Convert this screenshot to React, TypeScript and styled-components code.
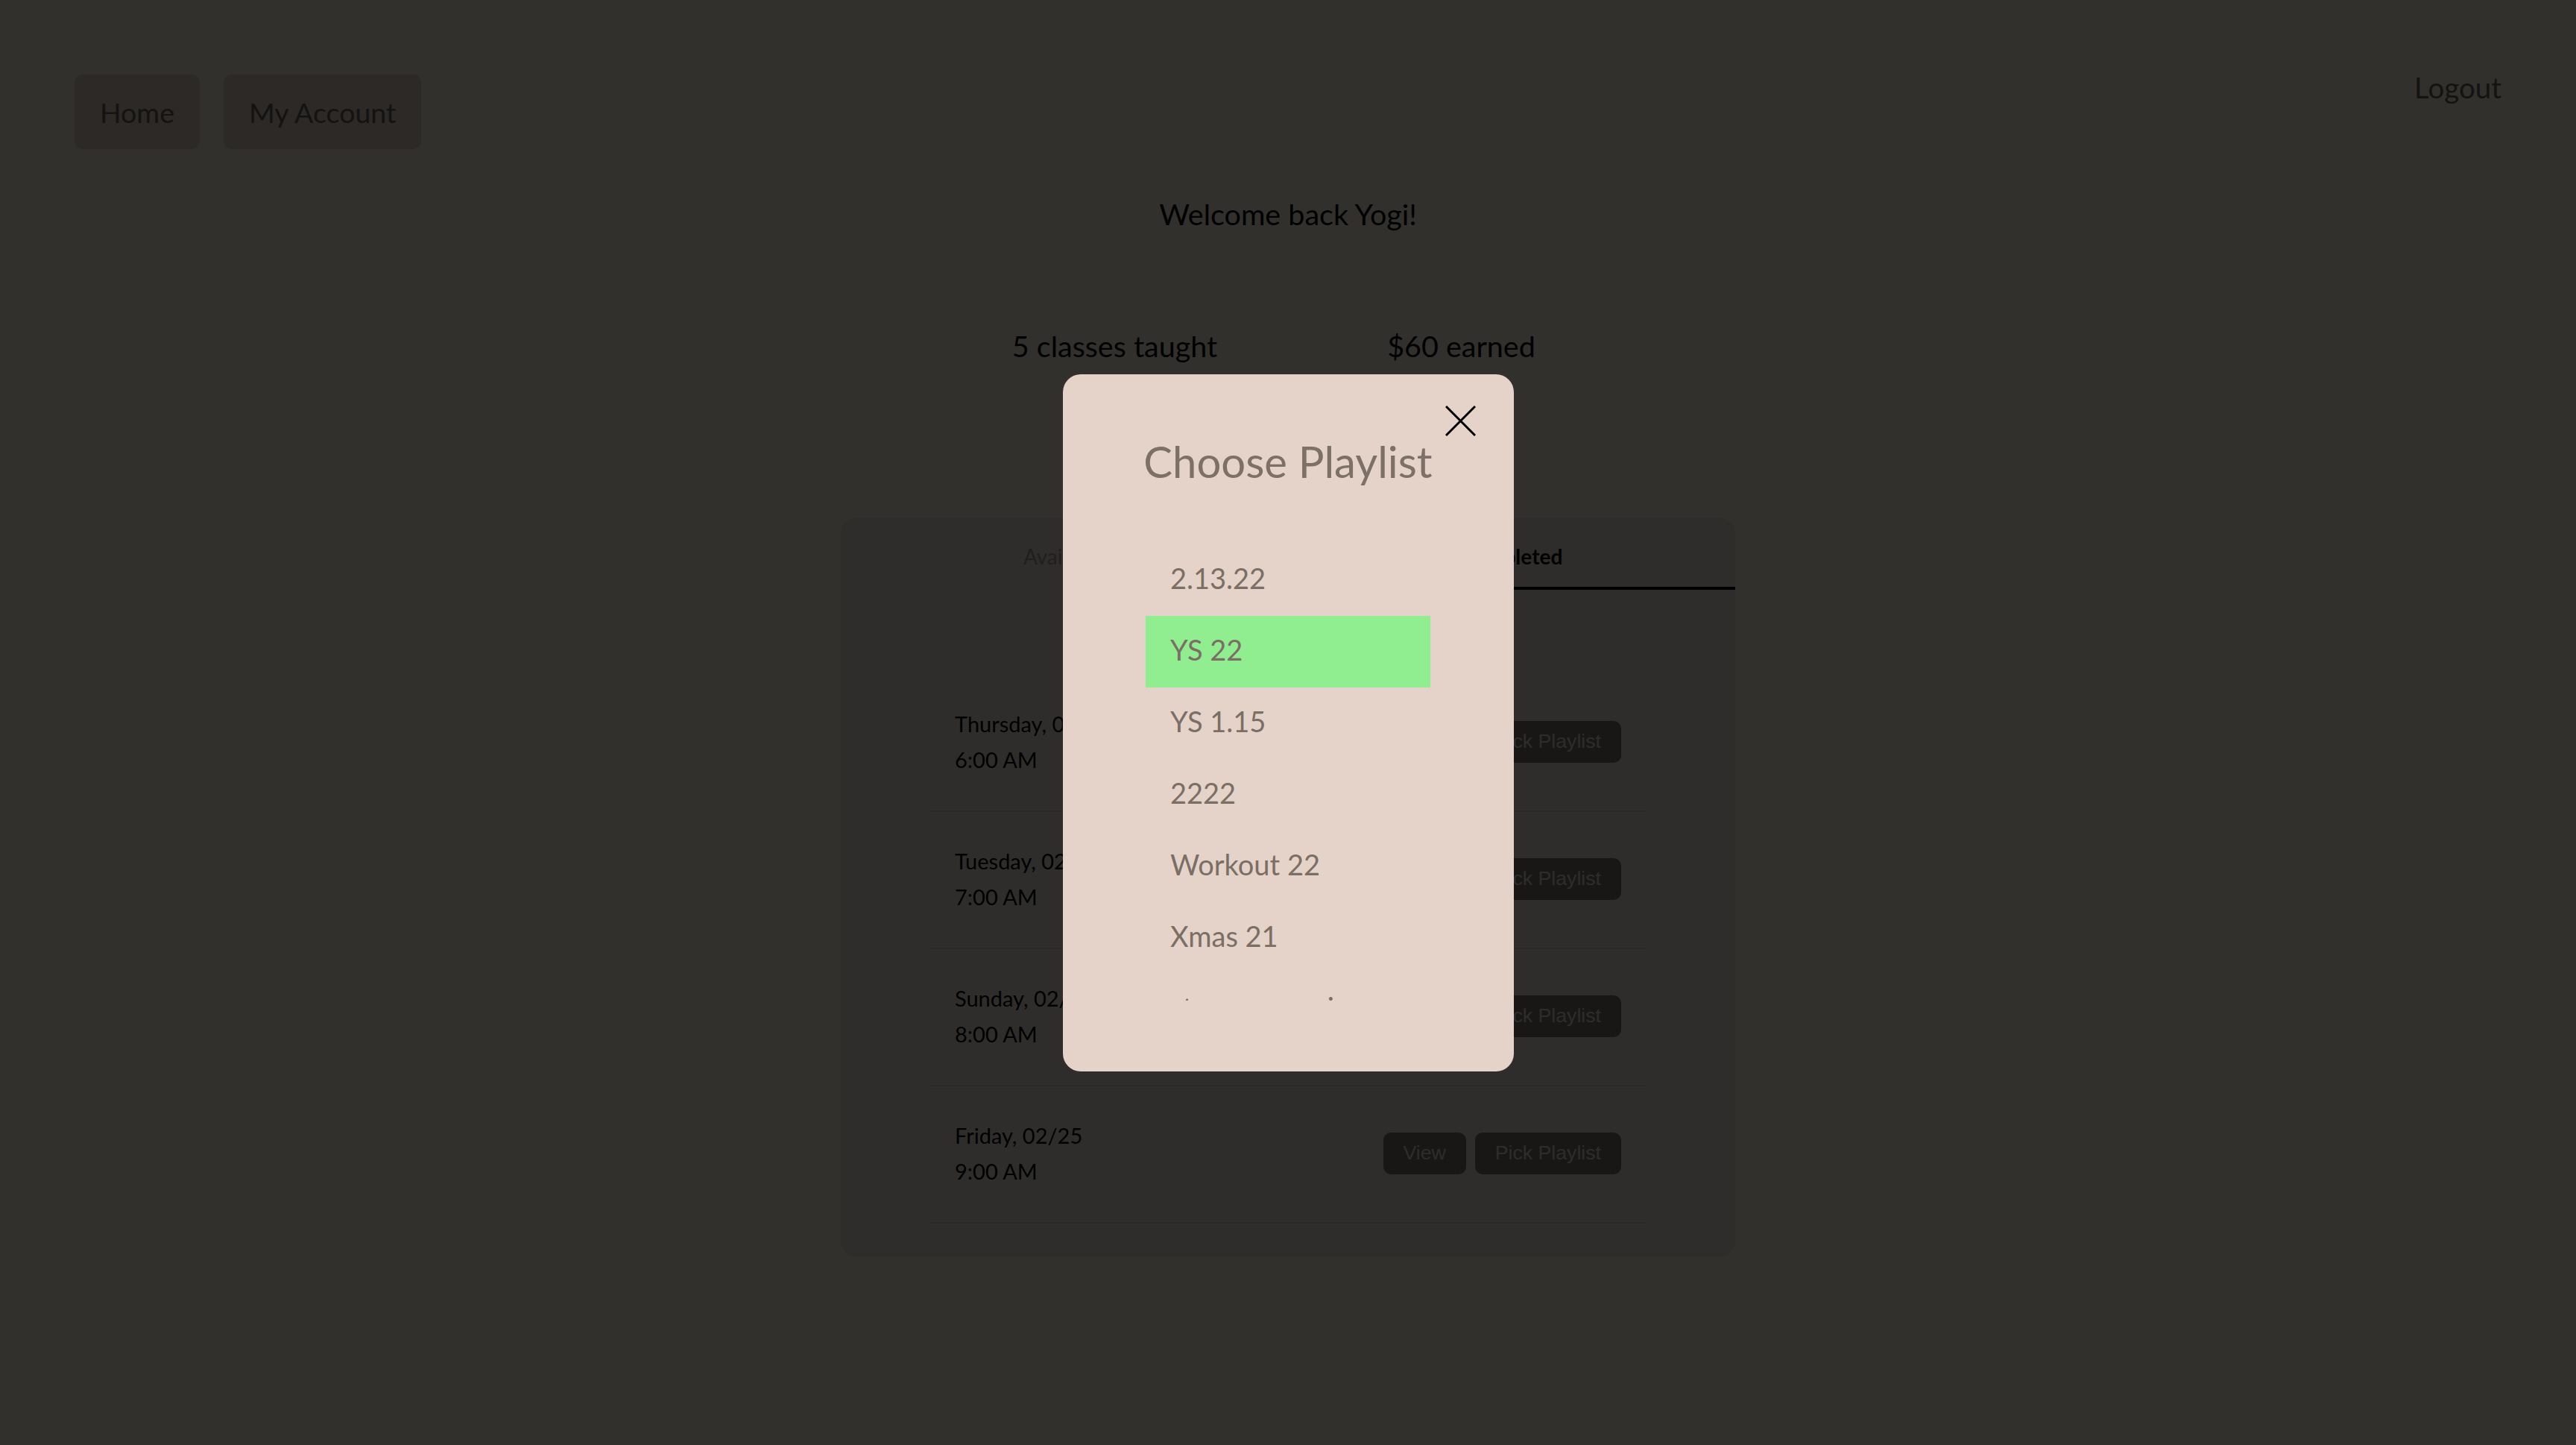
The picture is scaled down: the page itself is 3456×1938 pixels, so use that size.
import React from 'react';
import styled, { createGlobalStyle } from 'styled-components';

const GlobalStyle = createGlobalStyle`
    html, body {
        margin: 0;
        padding: 0;
        min-height: 100%;
        background: #faf0dc;
    }
    body {
        font-family: 'Lato', 'Noto Sans', sans-serif;
        color: #000;
    }
    * {
        box-sizing: border-box;
    }
`;

const Header = styled.header`
    display: flex;
    justify-content: space-between;
    align-items: flex-start;
    padding: 89px 100px 0;
`;

const NavGroup = styled.nav`
    display: flex;
    gap: 32px;
    margin-top: 11px;
`;

const NavButton = styled.button`
    height: 100px;
    padding: 0 34px;
    border: none;
    border-radius: 10px;
    background: #dccdbe;
    color: #645f5a;
    font-family: inherit;
    font-size: 37.5px;
`;

const LogoutLink = styled.a`
    margin-top: 5px;
    font-size: 38.5px;
    line-height: 1.2;
    color: #645f5a;
    text-decoration: none;
`;

const Welcome = styled.h1`
    margin: 63px 0 0;
    font-size: 39.5px;
    font-weight: 400;
    line-height: 1.2;
    text-align: center;
`;

const Stats = styled.div`
    display: flex;
    justify-content: center;
    margin-top: 130px;
`;

const StatItem = styled.div`
    width: 465px;
    font-size: 39.5px;
    line-height: 1.2;
    text-align: center;
`;

const ClassCard = styled.section`
    width: 1200px;
    margin: 207px auto 0;
    padding-bottom: 44px;
    border-radius: 20px;
    background: #e6e1d7;
`;

const Tabs = styled.div`
    display: grid;
    grid-template-columns: 1fr 1fr;
`;

const Tab = styled.div<{ $active?: boolean }>`
    padding: 35px 0 24px;
    font-size: 28px;
    line-height: 1.2;
    text-align: center;
    font-weight: ${(p) => (p.$active ? 700 : 400)};
    color: ${(p) => (p.$active ? '#000' : '#a09b91')};
    border-bottom: 4px solid ${(p) => (p.$active ? '#000' : 'transparent')};
`;

const ClassList = styled.div`
    padding: 114px 120px 0;
`;

const ClassRow = styled.div`
    display: flex;
    justify-content: space-between;
    align-items: center;
    height: 184px;
    padding: 0 33px 3px;
    border-bottom: 2px solid #d2cdc3;
`;

const ClassTime = styled.div`
    font-size: 29px;
    line-height: 48px;
`;

const RowActions = styled.div`
    display: flex;
    gap: 12px;
`;

const ActionButton = styled.button`
    height: 56px;
    padding: 0 27px;
    border: none;
    border-radius: 10px;
    background: #78736a;
    color: #e6dcd2;
    font-family: 'Liberation Sans', Arial, sans-serif;
    font-size: 26.67px;
`;

const Overlay = styled.div`
    position: fixed;
    inset: 0;
    display: flex;
    align-items: center;
    justify-content: center;
    background: rgba(0, 0, 0, 0.8);
`;

const Modal = styled.div`
    position: relative;
    display: flex;
    flex-direction: column;
    align-items: center;
    width: 605px;
    height: 935px;
    padding-top: 82px;
    border-radius: 24px;
    background: #e5d3c9;
`;

const CloseButton = styled.button`
    position: absolute;
    top: 42px;
    right: 51px;
    width: 41px;
    height: 41px;
    padding: 0;
    border: none;
    background: none;
`;

const ModalTitle = styled.h2`
    margin: 0;
    font-size: 58px;
    font-weight: 400;
    line-height: 1.2;
    color: #7d7067;
`;

const PlaylistList = styled.ul`
    width: 382px;
    height: 612px;
    margin: 77px 0 0;
    padding: 0;
    list-style: none;
    overflow-y: auto;
    scrollbar-width: none;
`;

const PlaylistItem = styled.li<{ $selected?: boolean }>`
    display: flex;
    align-items: center;
    height: 96px;
    padding: 0 33px 7px;
    font-size: 38px;
    color: #7b6e65;
    background: ${(p) => (p.$selected ? '#90ee90' : 'transparent')};
`;

const classes = [
    { day: 'Thursday, 02/17', time: '6:00 AM' },
    { day: 'Tuesday, 02/22', time: '7:00 AM' },
    { day: 'Sunday, 02/20', time: '8:00 AM' },
    { day: 'Friday, 02/25', time: '9:00 AM' },
];

const playlists = ['2.13.22', 'YS 22', 'YS 1.15', '2222', 'Workout 22', 'Xmas 21', 'stay warm mix'];

const CloseIcon = () => (
    <svg width="41" height="41" viewBox="0 0 41 41">
        <path d="M1 1 L40 40 M40 1 L1 40" stroke="#000" strokeWidth="3" fill="none" />
    </svg>
);

export default function App() {
    return (
        <>
            <GlobalStyle />
            <Header>
                <NavGroup>
                    <NavButton>Home</NavButton>
                    <NavButton>My Account</NavButton>
                </NavGroup>
                <LogoutLink href="#">Logout</LogoutLink>
            </Header>
            <Welcome>Welcome back Yogi!</Welcome>
            <Stats>
                <StatItem>5 classes taught</StatItem>
                <StatItem>$60 earned</StatItem>
            </Stats>
            <ClassCard>
                <Tabs>
                    <Tab>Available</Tab>
                    <Tab $active>Completed</Tab>
                </Tabs>
                <ClassList>
                    {classes.map((c) => (
                        <ClassRow key={c.day}>
                            <ClassTime>
                                {c.day}
                                <br />
                                {c.time}
                            </ClassTime>
                            <RowActions>
                                <ActionButton>View</ActionButton>
                                <ActionButton>Pick Playlist</ActionButton>
                            </RowActions>
                        </ClassRow>
                    ))}
                </ClassList>
            </ClassCard>
            <Overlay>
                <Modal>
                    <CloseButton aria-label="Close">
                        <CloseIcon />
                    </CloseButton>
                    <ModalTitle>Choose Playlist</ModalTitle>
                    <PlaylistList>
                        {playlists.map((name) => (
                            <PlaylistItem key={name} $selected={name === 'YS 22'}>
                                {name}
                            </PlaylistItem>
                        ))}
                    </PlaylistList>
                </Modal>
            </Overlay>
        </>
    );
}
